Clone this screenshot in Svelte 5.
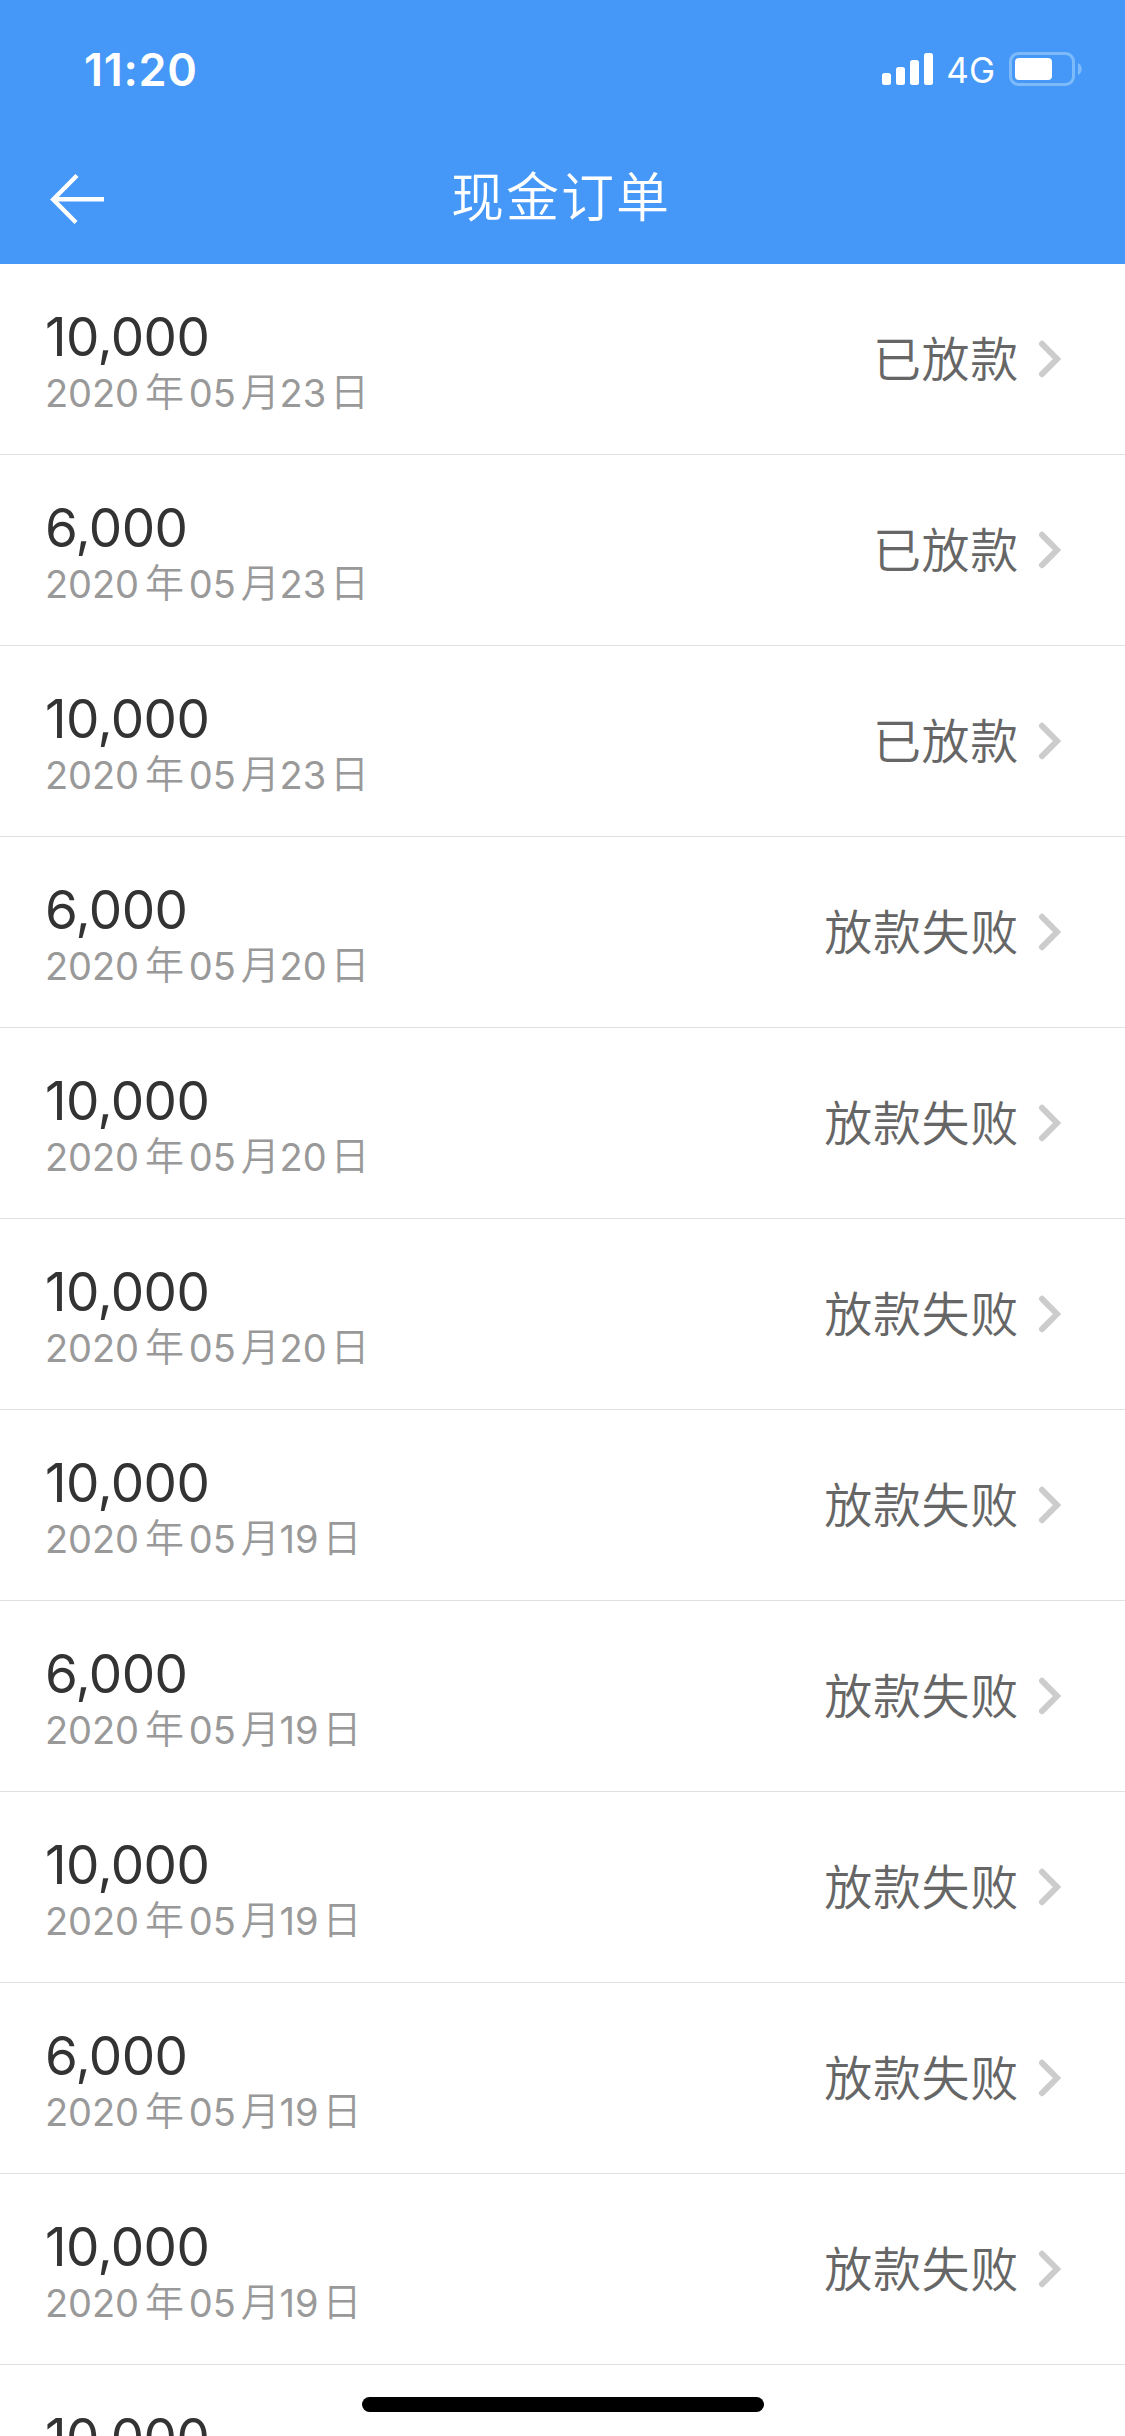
<script lang="ts">
  type Status = "paid" | "failed";

  interface Order {
    amount: number;
    date: string;
    status: Status;
  }

  const statusLabels: Record<Status, string> = {
    paid: "已放款",
    failed: "放款失败",
  };

  const orders: Order[] = [
    { amount: 10000, date: "2020-05-23", status: "paid" },
    { amount: 6000, date: "2020-05-23", status: "paid" },
    { amount: 10000, date: "2020-05-23", status: "paid" },
    { amount: 6000, date: "2020-05-20", status: "failed" },
    { amount: 10000, date: "2020-05-20", status: "failed" },
    { amount: 10000, date: "2020-05-20", status: "failed" },
    { amount: 10000, date: "2020-05-19", status: "failed" },
    { amount: 6000, date: "2020-05-19", status: "failed" },
    { amount: 10000, date: "2020-05-19", status: "failed" },
    { amount: 6000, date: "2020-05-19", status: "failed" },
    { amount: 10000, date: "2020-05-19", status: "failed" },
    { amount: 10000, date: "2020-05-19", status: "failed" },
  ];

  const units = ["年", "月", "日"];
</script>

<div class="screen">
  <header class="header">
    <div class="status-bar">
      <span class="time">11:20</span>
      <div class="indicators">
        <svg class="signal" width="52" height="32" viewBox="0 0 52 32" fill="#fff">
          <rect x="0" y="20" width="9" height="12" rx="2.5" />
          <rect x="14" y="14" width="9" height="18" rx="2.5" />
          <rect x="28" y="7" width="9" height="25" rx="2.5" />
          <rect x="42" y="0" width="9" height="32" rx="2.5" />
        </svg>
        <span class="network">4G</span>
        <svg class="battery" width="73" height="34" viewBox="0 0 73 34">
          <rect x="1.5" y="1.5" width="63" height="31" rx="8" fill="none" stroke="#7dbafa" stroke-width="3" />
          <rect x="6" y="6" width="37" height="22" rx="4" fill="#fff" />
          <path d="M69 11c5 2 5 10 0 12z" fill="#7dbafa" />
        </svg>
      </div>
    </div>
    <div class="nav">
      <button class="back" type="button" aria-label="返回">
        <svg width="56" height="52" viewBox="0 0 56 52" fill="none" stroke="#fff" stroke-width="4.4">
          <path d="M27 2.5 3.2 26.5 26 49.5M4 26.2h50" />
        </svg>
      </button>
      <h1 class="title">现金订单</h1>
    </div>
  </header>

  <ul class="list">
    {#each orders as order}
      <li class="row">
        <div class="info">
          <div class="amount">{order.amount.toLocaleString("en-US")}</div>
          <div class="date">
            {#each order.date.split("-") as part, i}<span>{part}</span><span class="unit">{units[i]}</span>{/each}
          </div>
        </div>
        <div class="state">
          <span class="label">{statusLabels[order.status]}</span>
          <svg class="chevron" width="24" height="38" viewBox="0 0 24 38" fill="none" stroke="#ccc" stroke-width="6" stroke-linecap="round">
            <path d="M4 3.8 19 19 4 34.2" />
          </svg>
        </div>
      </li>
    {/each}
  </ul>

  <div class="home-indicator"></div>
</div>

<style>
  :global(body) {
    background: #fff;
  }
  .screen {
    position: relative;
    width: 1125px;
    height: 2436px;
    overflow: hidden;
    background: #fff;
    font-family: Inter, "Noto Sans CJK SC", sans-serif;
  }
  .header {
    height: 264px;
    background: #4597f8;
    color: #fff;
  }
  .status-bar {
    display: flex;
    align-items: center;
    justify-content: space-between;
    height: 138px;
    padding: 0 43px 0 84px;
    box-sizing: border-box;
  }
  .time {
    font-size: 45px;
    font-weight: 600;
    letter-spacing: 0.7px;
  }
  .indicators {
    display: flex;
    align-items: center;
  }
  .network {
    margin: 2px 14px 0 12px;
    font-size: 35px;
  }
  .nav {
    display: grid;
    grid-template-columns: 200px 1fr 200px;
    align-items: center;
    height: 120px;
  }
  .back {
    display: flex;
    margin-left: 50px;
    padding: 2px 0 0;
    border: none;
    background: none;
  }
  .title {
    margin: 1px 3px 0 0;
    font-size: 53px;
    font-weight: 350;
    letter-spacing: 2px;
    line-height: 1;
    text-align: center;
  }
  .list {
    margin: 0;
    padding: 0;
    list-style: none;
  }
  .row {
    display: flex;
    justify-content: space-between;
    height: 191px;
    padding: 0 63px 0 45px;
    box-sizing: border-box;
    border-bottom: 1px solid #e0e0e0;
  }
  .info {
    padding-top: 43px;
  }
  .amount {
    height: 60px;
    font-size: 53px;
    line-height: 60px;
    letter-spacing: -0.6px;
    color: #333;
  }
  .date {
    display: flex;
    height: 52px;
    font-size: 38px;
    line-height: 52px;
    letter-spacing: -0.1px;
    color: #999;
  }
  .unit {
    margin: -1px 5px 0 6px;
    font-size: 39px;
    font-weight: 350;
  }
  .unit:nth-of-type(4) {
    margin: -1px 0 0 5px;
  }
  .unit:nth-of-type(6) {
    margin: -1px 0 0 4px;
  }
  .state {
    display: flex;
    align-items: center;
    height: 190px;
    font-size: 48px;
    font-weight: 350;
    letter-spacing: 0.7px;
    color: #666;
  }
  .label {
    padding-bottom: 7px;
  }
  .chevron {
    margin-left: 19px;
  }
  .home-indicator {
    position: absolute;
    left: 362px;
    bottom: 24px;
    width: 402px;
    height: 15px;
    border-radius: 8px;
    background: #000;
  }
</style>
